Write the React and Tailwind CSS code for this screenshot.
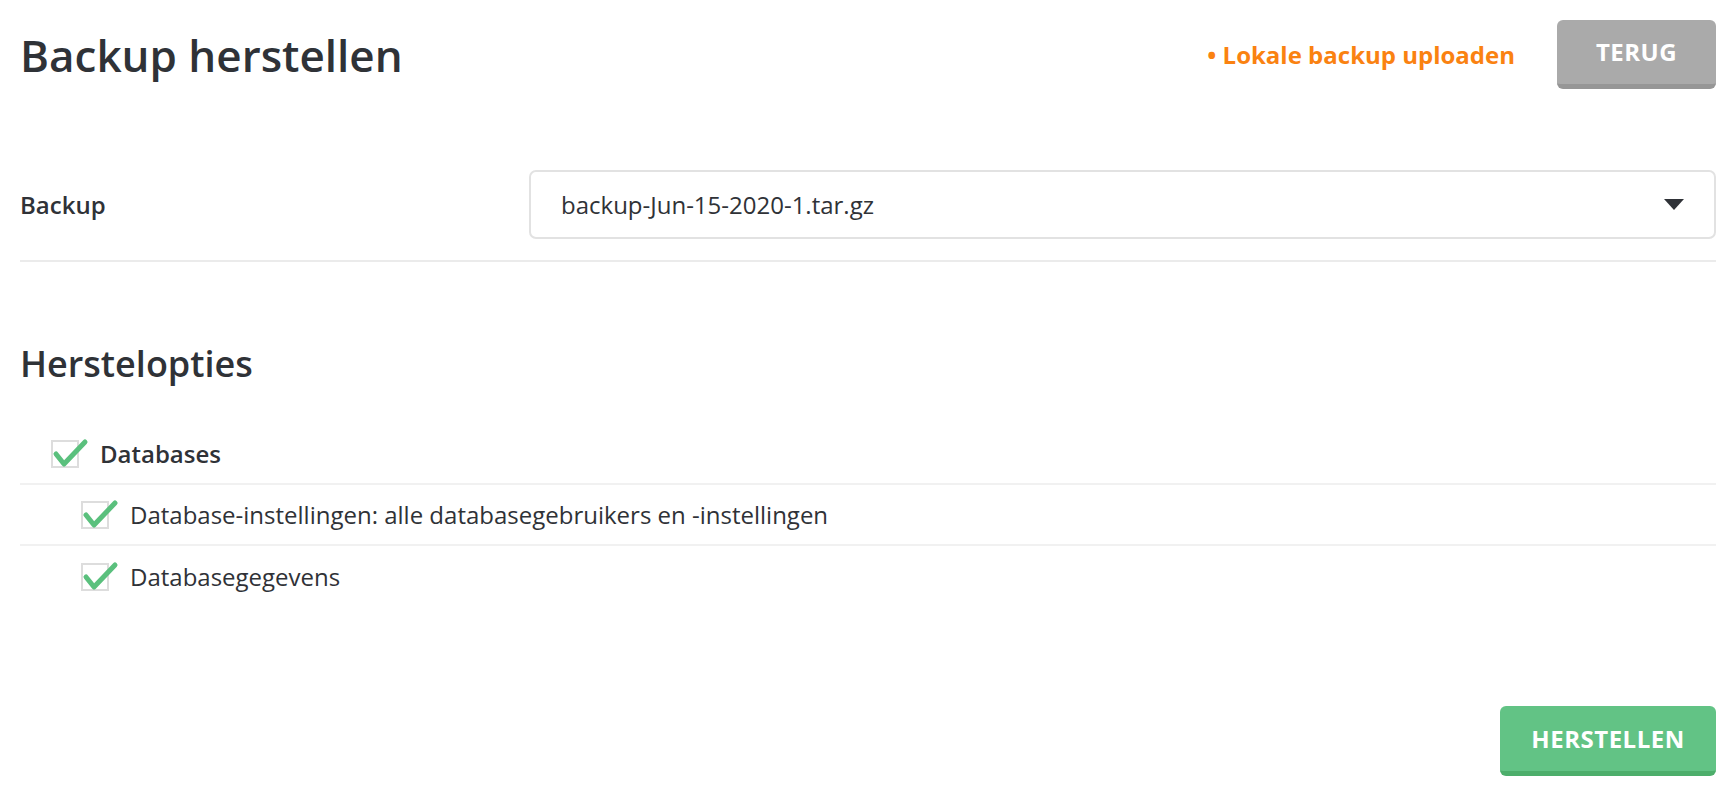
import React from "react";

function Check({ className = "" }) {
  return (
    <span className={"relative block w-[28px] h-[28px] border-2 border-[#dddddd] bg-white shrink-0 " + className}>
      <svg className="absolute left-[-2px] top-[-2px] overflow-visible" width="40" height="30" viewBox="0 0 40 30">
        <path d="M5 14 L13 24 L34 2" fill="none" stroke="#5ac07d" strokeWidth="5" strokeLinecap="round" strokeLinejoin="round" />
      </svg>
    </span>
  );
}

export default function App() {
  return (
    <div className="w-full h-[796px] bg-white px-5 pt-5 font-['Open_Sans',sans-serif] text-[#2f3237] overflow-hidden">
      <div className="flex items-center justify-between h-[69px]">
        <h1 className="text-[44px] font-semibold leading-none">Backup herstellen</h1>
        <div className="flex items-center gap-[42px]">
          <a className="text-[24px] font-bold text-[#fa8211]">• Lokale backup uploaden</a>
          <button className="w-[159px] h-[69px] rounded-[6px] bg-[#aaaaaa] border-b-[5px] border-[#969696] text-white text-[24px] font-bold tracking-[0.5px]">
            TERUG
          </button>
        </div>
      </div>

      <div className="mt-[81px] flex items-center pb-[21px] border-b-2 border-[#ebebeb]">
        <div className="w-[509px] text-[24px] font-semibold">Backup</div>
        <div className="flex-1 h-[69px] rounded-[7px] border-2 border-[#e2e2e2] flex items-center justify-between pl-[30px] pr-[30px]">
          <span className="text-[24px]">backup-Jun-15-2020-1.tar.gz</span>
          <svg width="20" height="11" viewBox="0 0 20 11">
            <path d="M0 0 H20 L10 11 Z" fill="#2f3237" />
          </svg>
        </div>
      </div>

      <h2 className="mt-[81px] text-[36px] font-semibold leading-[42px]">Herstelopties</h2>

      <div className="mt-[39px]">
        <div className="h-[61px] flex items-center border-b-2 border-[#f1f1f1] pl-[31px]">
          <Check />
          <span className="ml-[21px] text-[24px] font-semibold">Databases</span>
        </div>
        <div className="h-[61px] flex items-center border-b-2 border-[#f1f1f1] pl-[61px]">
          <Check />
          <span className="ml-[21px] text-[24px]">Database-instellingen: alle databasegebruikers en -instellingen</span>
        </div>
        <div className="h-[61px] flex items-center pl-[61px]">
          <Check />
          <span className="ml-[21px] text-[24px]">Databasegegevens</span>
        </div>
      </div>

      <div className="mt-[99px] flex justify-end">
        <button className="w-[216px] h-[70px] rounded-[6px] bg-[#62c385] border-b-[5px] border-[#4dae6b] text-white text-[24px] font-bold tracking-[0.5px]">
          HERSTELLEN
        </button>
      </div>
    </div>
  );
}
